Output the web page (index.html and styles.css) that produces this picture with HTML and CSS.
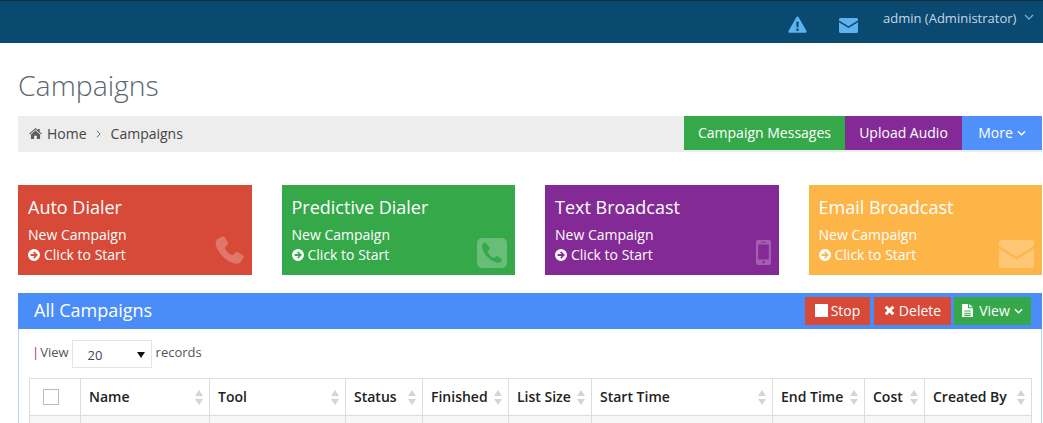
FILE: index.html
```html
<!DOCTYPE html>
<html lang="en">
<head>
<meta charset="utf-8">
<title>Campaigns</title>
<link rel="stylesheet" href="styles.css">
</head>
<body>
<header class="topbar">
  <svg class="top-icon warn" viewBox="0 0 20 18"><path fill-rule="evenodd" d="M10 .5c.5 0 .9.3 1.2.8l8.3 14.6c.5.9-.1 1.9-1.1 1.900H1.600c-1 0-1.600-1-1.100-1.900L8.800 1.300C9.100.8 9.500.5 10 .5zM8.700 6l.3 6h2l.3-6zM8.800 13.200v2.600h2.400v-2.600z"/></svg>
  <svg class="top-icon mail" viewBox="0 0 19 15"><path d="M1.500 0h16C18.300 0 19 .7 19 1.500v.9L9.500 8.300 0 2.400v-.9C0 .7.700 0 1.500 0z"/><path d="M0 4.200l9.500 5.900L19 4.200v9.300c0 .8-.7 1.500-1.500 1.500h-16C.7 15 0 14.300 0 13.500z"/></svg>
  <span class="user">admin (Administrator)</span>
  <svg class="user-caret" viewBox="0 0 10 6"><path d="M1 1l4 4 4-4" fill="none" stroke="currentColor" stroke-width="1.300"/></svg>
</header>
<main class="content">
  <h1 class="title">Campaigns</h1>
  <nav class="crumbbar">
    <div class="crumbs">
      <svg class="home" viewBox="0 0 14 12"><path d="M7 0l2.600 2.300V1h2v3.100L14 6.200l-.7.8L7 1.500.7 7 0 6.200z"/><path d="M7 2.800l5 4.400V12H8.500V8.500h-3V12H2V7.200z"/></svg>
      <span>Home</span>
      <svg class="sep" viewBox="0 0 5 8"><path d="M1 .8L4 4 1 7.200" fill="none" stroke="currentColor" stroke-width="1"/></svg>
      <span>Campaigns</span>
    </div>
    <div class="crumb-actions">
      <a class="act green act-msg">Campaign Messages</a>
      <a class="act purple act-up">Upload Audio</a>
      <a class="act blue act-more">More <svg class="chev" viewBox="0 0 10 6"><path d="M1 1l4 4 4-4" fill="none" stroke="currentColor" stroke-width="1.500"/></svg></a>
    </div>
  </nav>

  <section class="cards">
    <article class="card red">
      <h2>Auto Dialer</h2>
      <p>New Campaign</p>
      <p class="start"><svg class="go" viewBox="0 0 12 12"><path fill-rule="evenodd" d="M6 0a6 6 0 1 1 0 12A6 6 0 0 1 6 0zm.2 2.300L5.100 3.400 6.700 5H2.600v2h4.100L5.100 8.600l1.100 1.100L9.900 6z"/></svg>Click to Start</p>
      <svg class="card-icon ic-phone" viewBox="0 0 29 29"><path d="M7.500.6c.8-.4 1.800-.2 2.300.6l3 5.200c.4.700.3 1.500-.2 2.100L10.200 11.200c-.3.300-.3.700-.2 1 1.300 3.100 3.700 5.500 6.800 6.900.3.100.7.100 1-.2l2.700-2.500c.6-.5 1.500-.6 2.200-.2l5.200 3.100c.8.500 1.100 1.500.7 2.300-1 2.500-2.800 5-5.300 5.800-2 .6-4.500.1-7.100-1.100C10 23.700 4.900 18.500 2 12.200.8 9.500.4 7.300.9 5.400 1.500 3.300 4.600 1.700 7.500.6z"/></svg>
    </article>
    <article class="card green">
      <h2>Predictive Dialer</h2>
      <p>New Campaign</p>
      <p class="start"><svg class="go" viewBox="0 0 12 12"><path fill-rule="evenodd" d="M6 0a6 6 0 1 1 0 12A6 6 0 0 1 6 0zm.2 2.300L5.100 3.400 6.700 5H2.600v2h4.100L5.100 8.600l1.100 1.100L9.900 6z"/></svg>Click to Start</p>
      <svg class="card-icon ic-square" viewBox="0 0 30 30"><path fill-rule="evenodd" d="M5 0h20a5 5 0 0 1 5 5v20a5 5 0 0 1-5 5H5a5 5 0 0 1-5-5V5a5 5 0 0 1 5-5zm4.300 5.200c-.6-.9-1.500-.9-2.300-.4C5.600 5.700 4.800 7 5 8.800c.5 3.600 2.300 6.900 5 9.800 2.800 2.900 6 5 9.500 6 1.800.5 3.400.2 4.700-1 .9-.9.9-1.900.1-2.600l-3.300-2.600c-.6-.5-1.300-.5-1.900 0l-1.700 1.400c-.3.200-.6.200-.9.100-2.400-1.200-4.500-3.300-5.800-5.800-.2-.4-.1-.7.200-1l1.500-1.600c.5-.6.500-1.300.1-1.900z"/></svg>
    </article>
    <article class="card purple">
      <h2>Text Broadcast</h2>
      <p>New Campaign</p>
      <p class="start"><svg class="go" viewBox="0 0 12 12"><path fill-rule="evenodd" d="M6 0a6 6 0 1 1 0 12A6 6 0 0 1 6 0zm.2 2.300L5.100 3.400 6.700 5H2.600v2h4.100L5.100 8.600l1.100 1.100L9.900 6z"/></svg>Click to Start</p>
      <svg class="card-icon ic-mobile" viewBox="0 0 15 25"><path fill-rule="evenodd" d="M2 0h11a2 2 0 0 1 2 2v21a2 2 0 0 1-2 2H2a2 2 0 0 1-2-2V2a2 2 0 0 1 2-2zm.2 4.500v15h10.600v-15zM7.500 20.800a1.300 1.300 0 1 0 0 2.600 1.300 1.300 0 0 0 0-2.600zM5.500 1.800v1h4v-1z"/></svg>
    </article>
    <article class="card amber">
      <h2>Email Broadcast</h2>
      <p>New Campaign</p>
      <p class="start"><svg class="go" viewBox="0 0 12 12"><path fill-rule="evenodd" d="M6 0a6 6 0 1 1 0 12A6 6 0 0 1 6 0zm.2 2.300L5.100 3.400 6.700 5H2.600v2h4.100L5.100 8.600l1.100 1.100L9.900 6z"/></svg>Click to Start</p>
      <svg class="card-icon ic-mail" viewBox="0 0 35 28"><path d="M2.500 0h30A2.500 2.500 0 0 1 35 2.500v3.300L17.500 17 0 5.800V2.500A2.500 2.500 0 0 1 2.500 0z"/><path d="M0 8.500l17.500 11L35 8.500v17a2.500 2.500 0 0 1-2.500 2.500h-30A2.500 2.500 0 0 1 0 25.500z"/></svg>
    </article>
  </section>

  <section class="panel">
    <div class="panel-head">
      <h2>All Campaigns</h2>
      <div class="panel-actions">
        <a class="btn red btn-stop"><i class="stop-sq"></i>Stop</a>
        <a class="btn red btn-del"><svg class="btn-x" viewBox="0 0 10 10"><path d="M2.500.6L5 3.100 7.500.6l1.900 1.900L6.900 5l2.500 2.500-1.900 1.900L5 6.900 2.500 9.400.6 7.500 3.100 5 .6 2.500z"/></svg>Delete</a>
        <a class="btn green btn-view"><svg class="btn-doc" viewBox="0 0 10 12"><path fill-rule="evenodd" d="M0 0h5.500v4H10v8H0zM2 6v1h6V6zm0 2v1h6V8zm0 2v1h6v-1zM6.500 0L10 3H6.500z"/></svg>View <svg class="chev" viewBox="0 0 10 6"><path d="M1 1l4 4 4-4" fill="none" stroke="currentColor" stroke-width="1.500"/></svg></a>
      </div>
    </div>
    <div class="panel-body">
      <div class="length">
        <span class="bar">|</span><span class="lbl">View</span>
        <div class="select"><span>20</span><i class="tri"></i></div>
        <span class="lbl">records</span>
      </div>
      <table class="grid">
        <colgroup>
          <col class="c1"><col class="c2"><col class="c3"><col class="c4"><col class="c5"><col class="c6"><col class="c7"><col class="c8"><col class="c9"><col class="c10">
        </colgroup>
        <thead>
          <tr>
            <th class="check"><i class="box"></i></th>
            <th>Name<i class="sort"></i></th>
            <th>Tool<i class="sort"></i></th>
            <th>Status<i class="sort"></i></th>
            <th>Finished<i class="sort"></i></th>
            <th>List Size<i class="sort"></i></th>
            <th>Start Time<i class="sort"></i></th>
            <th>End Time<i class="sort"></i></th>
            <th>Cost<i class="sort"></i></th>
            <th>Created By<i class="sort"></i></th>
          </tr>
        </thead>
        <tbody>
          <tr class="row"><td></td><td></td><td></td><td></td><td></td><td></td><td></td><td></td><td></td><td></td></tr>
        </tbody>
      </table>
    </div>
  </section>
</main>
</body>
</html>
```
FILE: styles.css
```css
* { box-sizing: border-box; }
html, body { margin: 0; height: 423px; overflow: hidden; background: #fff; }
body { font-family: "Open Sans", "Liberation Sans", sans-serif; font-size: 14px; color: #333; }
h1, h2, p { margin: 0; font-weight: 400; }
a { display: flex; align-items: center; color: #fff; }

.topbar { height: 43px; background: #0b4a70; border-top: 1px solid #1b2a38; display: flex; align-items: flex-start; color: #c4d8e6; }
.top-icon { fill: #5cb3ee; flex: none; }
.warn { width: 19px; height: 17px; margin: 15px 0 0 788px; }
.mail { width: 19px; height: 15px; margin: 17px 0 0 32px; }
.user { margin: 8px 0 0 25px; font-size: 13px; line-height: 18px; white-space: nowrap; }
.user-caret { width: 10px; height: 6px; margin: 13px 0 0 8px; color: #5cb3ee; flex: none; }

.content { padding: 0 1px 0 18px; }
.title { font-size: 28.4px; font-weight: 300; line-height: 40px; margin-top: 22px; color: #5a6670; padding-bottom: 1px; }

.crumbbar { height: 36px; margin-top: 10px; background: #ededed; display: flex; justify-content: space-between; }
.crumbs { display: flex; align-items: center; padding: 0 0 2px 11px; color: #444; font-size: 14px; }
.home { width: 13px; height: 11px; fill: #5f5f5f; margin-right: 5px; }
.sep { width: 5px; height: 8px; margin: 1px 10px 0 9px; color: #666; }
.crumb-actions { display: flex; }
.act { justify-content: center; font-size: 14px; height: 34px; padding-bottom: 2px; }
.act-msg { width: 161px; }
.act-up { width: 117px; }
.act-more { width: 80px; gap: 4px; }
.chev { width: 9px; height: 6px; margin-top: 1px; }

.green { background: #35a94a; }
.purple { background: #842a96; }
.blue { background: #4f90fb; }
.red { background: #d64a37; }
.amber { background: #feb548; }

.cards { display: grid; grid-template-columns: repeat(4, 1fr); column-gap: 30px; margin-top: 33px; }
.card { position: relative; height: 90px; padding: 10px 10px 0; color: #fff; }
.card h2 { font-size: 18px; line-height: 25px; margin-bottom: 5px; }
.card p { font-size: 14px; line-height: 20px; }
.start { display: flex; align-items: center; }
.go { width: 12px; height: 12px; fill: #fff; margin-right: 4px; }
.card-icon { position: absolute; fill: #fff; opacity: .25; }
.ic-phone { width: 29px; height: 29px; right: 8px; bottom: 10px; }
.ic-square { width: 30px; height: 30px; right: 8px; bottom: 7px; }
.ic-mobile { width: 15px; height: 25px; right: 8px; bottom: 10px; }
.ic-mail { width: 35px; height: 28px; right: 8px; bottom: 7px; }

.panel { margin-top: 18px; border: 1px solid #bcd4fb; border-top: 0; height: 140px; }
.panel-head { height: 36px; background: #4b8df8; margin: 0 -1px; display: flex; justify-content: space-between; align-items: center; padding: 0 11px 0 16px; color: #fff; }
.panel-head h2 { font-size: 18px; line-height: 24px; padding-bottom: 2px; }
.panel-actions { display: flex; gap: 3px; }
.btn { height: 28px; font-size: 14px; justify-content: center; padding-bottom: 2px; }
.btn-stop { width: 65px; margin-right: 1px; }
.btn-del { width: 77px; }
.btn-view { width: 77px; gap: 4px; }
.stop-sq { width: 13px; height: 13px; background: #fff; margin-right: 3px; }
.btn-x { width: 11px; height: 11px; fill: #fff; margin-right: 4px; }
.btn-doc { width: 11px; height: 13px; fill: #fff; margin-right: 2px; }

.panel-body { padding: 11px 10px 0; }
.length { display: flex; align-items: center; height: 28px; font-size: 13px; color: #555; }
.bar { color: #a0327a; margin: 0 1px 0 3px; padding-bottom: 5px; }
.select { width: 80px; height: 28px; margin: 0 4px 0 3px; border: 1px solid #e5e5e5; position: relative; display: flex; align-items: center; padding: 2px 0 0 15px; font-size: 13px; color: #444; }
.tri { position: absolute; right: 6px; top: 11px; border: 4px solid transparent; border-top: 6px solid #111; border-bottom: 0; }
.lbl { line-height: 20px; padding-bottom: 5px; }

.grid { width: 1002px; table-layout: fixed; border-collapse: collapse; margin-top: 10px; }
.c1 { width: 51px; } .c2 { width: 129px; } .c3 { width: 136px; } .c4 { width: 77px; } .c5 { width: 86px; }
.c6 { width: 83px; } .c7 { width: 181px; } .c8 { width: 92px; } .c9 { width: 60px; } .c10 { width: 107px; }
.grid th { position: relative; height: 37px; padding: 0 0 2px 8px; border: 1px solid #ddd; text-align: left; font-size: 14px; font-weight: 600; color: #222; white-space: nowrap; }
.grid .check { padding: 0; }
.box { display: block; width: 16px; height: 16px; border: 1px solid #bbb; margin-left: 13px; }
.sort { position: absolute; right: 6px; top: 11px; width: 8px; height: 15px; }
.sort::before, .sort::after { content: ""; position: absolute; left: 0; border: 4px solid transparent; }
.sort::before { top: 0; border-top: 0; border-bottom: 6px solid #d4d4d4; }
.sort::after { bottom: 0; border-bottom: 0; border-top: 6px solid #d4d4d4; }
.row td { height: 37px; background: #f7f7f7; border: 1px solid #ddd; }
```
